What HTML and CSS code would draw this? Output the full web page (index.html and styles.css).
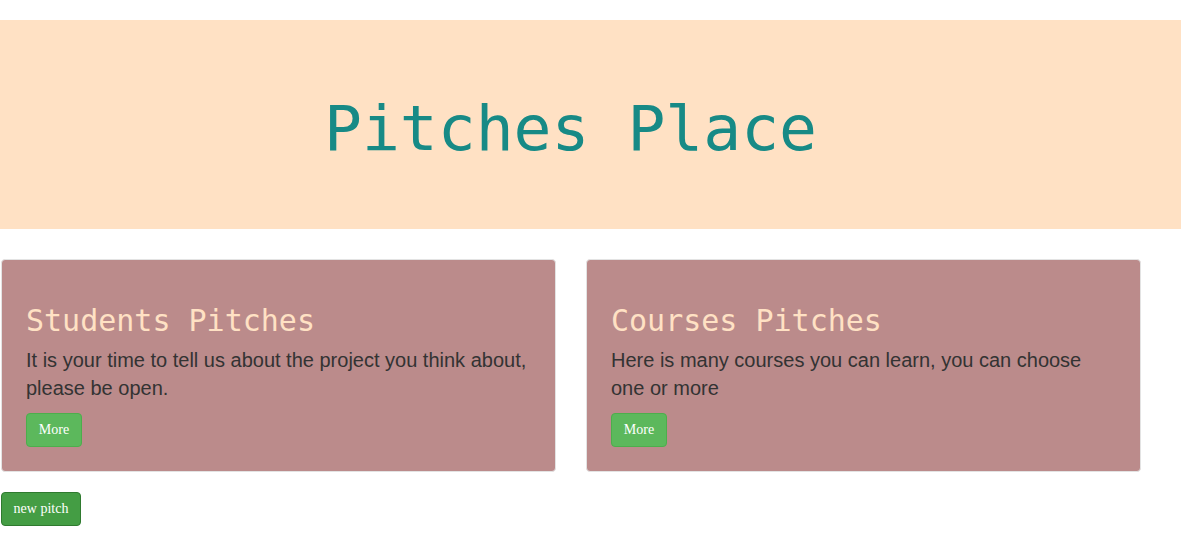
FILE: index.html
```html
<!DOCTYPE html>
<html>
<head>
<meta charset="utf-8">
<link rel="stylesheet" href="styles.css">
</head>
<body>
<header class="hero">
  <h1 class="hero-title">Pitches Place</h1>
</header>
<main class="cards">
  <section class="card">
    <h2 class="card-title">Students Pitches</h2>
    <p class="card-text">It is your time to tell us about the project you think about, please be open.</p>
    <button class="btn btn-more">More</button>
  </section>
  <section class="card">
    <h2 class="card-title">Courses Pitches</h2>
    <p class="card-text">Here is many courses you can learn, you can choose one or more</p>
    <button class="btn btn-more">More</button>
  </section>
</main>
<div class="actions">
  <button class="btn btn-new">new pitch</button>
</div>
</body>
</html>
```
FILE: styles.css
```css
html, body {
  margin: 0;
  padding: 0;
  background: #fff;
}
body {
  font-family: "Liberation Sans", Arial, sans-serif;
  color: #333;
}
.hero {
  margin-top: 20px;
  height: 209px;
  background: #ffe1c4;
  display: flex;
  align-items: center;
  justify-content: center;
}
.hero-title {
  margin: 0;
  font-family: "DejaVu Sans Mono", monospace;
  font-weight: normal;
  font-size: 63px;
  line-height: 1;
  color: #178a86;
  padding-right: 40px;
  padding-top: 8px;
}
.cards {
  display: flex;
  gap: 30px;
  margin-top: 30px;
  padding-left: 1px;
}
.card {
  flex: 0 0 555px;
  box-sizing: border-box;
  height: 213px;
  background: #bb8b8b;
  border: 1px solid #e3e3e3;
  border-radius: 4px;
  padding: 43px 24px 0 24px;
}
.card-title {
  margin: 0;
  font-family: "DejaVu Sans Mono", monospace;
  font-weight: normal;
  font-size: 30px;
  line-height: 36px;
  color: #ffe1c4;
}
.card-text {
  margin: 7px 0 11px;
  font-size: 20px;
  line-height: 28px;
  color: #333;
}
.btn {
  font-family: "Liberation Serif", serif;
  font-size: 14px;
  color: #fff;
  border-radius: 4px;
  cursor: pointer;
  box-sizing: border-box;
}
.btn-more {
  width: 56px;
  height: 34px;
  padding: 0;
  background: #5cb85c;
  border: 1px solid #4cae4c;
}
.actions {
  margin-top: 20px;
  padding-left: 1px;
}
.btn-new {
  width: 80px;
  height: 34px;
  padding: 0;
  background: #449d44;
  border: 1px solid #2f7a2f;
}
```
